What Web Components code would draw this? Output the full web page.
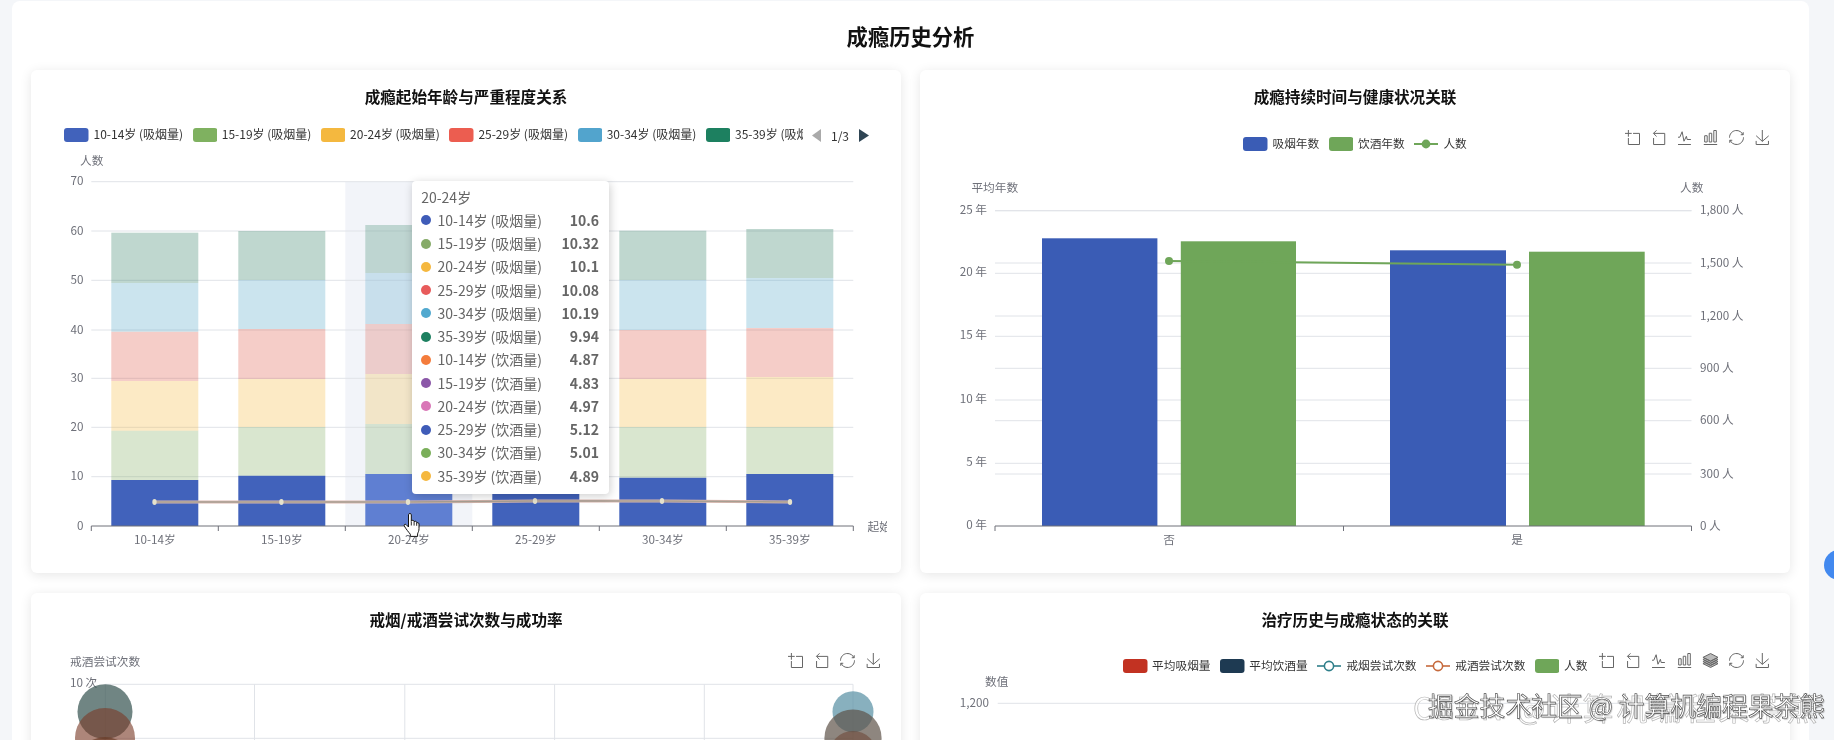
<!DOCTYPE html>
<html lang="zh">
<head>
<meta charset="utf-8">
<title>成瘾历史分析</title>
<style>
html,body{margin:0;height:740px;overflow:hidden;background:#f4f6f9;font-family:"Noto Sans CJK SC","Noto Sans",sans-serif}
</style>
</head>
<body>
<dash-page>
  <dash-card heading="成瘾起始年龄与严重程度关系">
    <chart-legend slot="top" pager style="margin:2px 0 0 33.4px;font-size:12px">
      <legend-item color="#4162bb">10-14岁 (吸烟量)</legend-item>
      <legend-item color="#7fb160">15-19岁 (吸烟量)</legend-item>
      <legend-item color="#f4b83f">20-24岁 (吸烟量)</legend-item>
      <legend-item color="#ec5d50">25-29岁 (吸烟量)</legend-item>
      <legend-item color="#52a4cd">30-34岁 (吸烟量)</legend-item>
      <legend-item color="#1d8060">35-39岁 (吸烟量)</legend-item>
    </chart-legend>
    <onset-chart></onset-chart>
    <hover-tip slot="over" heading="20-24岁" style="left:380.7px;top:110.5px">
      <tip-row color="#3f5cb8" value="10.6">10-14岁 (吸烟量)</tip-row>
      <tip-row color="#86ab68" value="10.32">15-19岁 (吸烟量)</tip-row>
      <tip-row color="#f5b83f" value="10.1">20-24岁 (吸烟量)</tip-row>
      <tip-row color="#e85b5b" value="10.08">25-29岁 (吸烟量)</tip-row>
      <tip-row color="#52a9cf" value="10.19">30-34岁 (吸烟量)</tip-row>
      <tip-row color="#1d8060" value="9.94">35-39岁 (吸烟量)</tip-row>
      <tip-row color="#f47c3c" value="4.87">10-14岁 (饮酒量)</tip-row>
      <tip-row color="#8b57a8" value="4.83">15-19岁 (饮酒量)</tip-row>
      <tip-row color="#d977b7" value="4.97">20-24岁 (饮酒量)</tip-row>
      <tip-row color="#3f5cb8" value="5.12">25-29岁 (饮酒量)</tip-row>
      <tip-row color="#7aaf5a" value="5.01">30-34岁 (饮酒量)</tip-row>
      <tip-row color="#f5b83f" value="4.89">35-39岁 (饮酒量)</tip-row>
    </hover-tip>
    <hand-cursor slot="over" style="left:372px;top:443px"></hand-cursor>
  </dash-card>

  <dash-card heading="成瘾持续时间与健康状况关联">
    <chart-legend slot="top" style="margin:11px 0 0 323.4px">
      <legend-item color="#3a5cb5">吸烟年数</legend-item>
      <legend-item color="#6fa659">饮酒年数</legend-item>
      <legend-item kind="line" color="#6fa659">人数</legend-item>
    </chart-legend>
    <tool-box slot="top" icons="zoom back line bar restore save"></tool-box>
    <duration-chart></duration-chart>
  </dash-card>

  <dash-card heading="戒烟/戒酒尝试次数与成功率">
    <axis-name slot="top" style="margin:4px 0 0 39px">戒酒尝试次数</axis-name>
    <tool-box slot="top" icons="zoom back restore save"></tool-box>
    <attempt-chart></attempt-chart>
  </dash-card>

  <dash-card heading="治疗历史与成瘾状态的关联">
    <chart-legend slot="top" style="margin:10px 0 0 203px">
      <legend-item color="#c23222">平均吸烟量</legend-item>
      <legend-item color="#1e3a52">平均饮酒量</legend-item>
      <legend-item kind="ring" color="#2f7f8a">戒烟尝试次数</legend-item>
      <legend-item kind="ring" color="#c66a3d">戒酒尝试次数</legend-item>
      <legend-item color="#6fa659">人数</legend-item>
    </chart-legend>
    <tool-box slot="top" icons="zoom back line bar stack restore save"></tool-box>
    <treatment-chart></treatment-chart>
  </dash-card>
</dash-page>
<float-dot></float-dot>
<water-mark></water-mark>

<script>
const FONT='"Noto Sans CJK SC","Noto Sans",sans-serif';
const AXIS='#6e7079',GRID='#e0e3e8';
const txt=(x,y,s,a='start',fill=AXIS,size=11.7,extra='')=>`<text x="${x}" y="${y}" text-anchor="${a}" dominant-baseline="central" fill="${fill}" font-size="${size}" ${extra}>${s}</text>`;
const hline=(x1,x2,y,c=GRID)=>`<line x1="${x1}" x2="${x2}" y1="${y}" y2="${y}" stroke="${c}" stroke-width="1"/>`;
const vline=(x,y1,y2,c=GRID)=>`<line x1="${x}" x2="${x}" y1="${y1}" y2="${y2}" stroke="${c}" stroke-width="1"/>`;
const rect=(x,y,w,h,f,o=1)=>`<rect x="${x}" y="${y}" width="${w}" height="${h}" fill="${f}" opacity="${o}"/>`;

class Base extends HTMLElement{
  constructor(){super();this.attachShadow({mode:'open'});}
  render(html){this.shadowRoot.innerHTML=html;}
}
class SvgChart extends Base{
  connectedCallback(){
    const [x,y]=this.origin;
    this.render(`<style>:host{display:block;height:422px}svg{display:block;overflow:visible;font-family:${FONT}}</style>
    <svg width="870" height="422" viewBox="${x} ${y} 870 422">${this.draw()}</svg>`);
  }
}

customElements.define('dash-page',class extends Base{
  connectedCallback(){this.render(`<style>
    :host{display:block;box-sizing:border-box;width:1797px;margin:1px 0 0 12px;padding:5px 19px 0;background:#fff;border-radius:8px;color:#000;filter:blur(.35px)}
    h1{margin:0 0 4px;text-align:center;font-size:21.3px;line-height:60px;height:60px;font-weight:700;color:#111}
    .grid{display:grid;grid-template-columns:870px 870px;gap:20px 19px}
  </style><h1>成瘾历史分析</h1><div class="grid"><slot></slot></div>`);}
});

customElements.define('dash-card',class extends Base{
  connectedCallback(){this.render(`<style>
    :host{display:block;position:relative;height:503px;background:#fff;border-radius:6px;box-shadow:0 2px 12px rgba(0,0,0,.1)}
    h2{margin:0;height:56px;line-height:53.5px;text-align:center;font-size:15.6px;font-weight:700;color:#111}
    .top{display:grid;height:25px;grid-template-columns:1fr}
    ::slotted([slot=top]){grid-area:1/1}
  </style><h2>${this.getAttribute('heading')}</h2><div class="top"><slot name="top"></slot></div><slot></slot><slot name="over"></slot>`);}
});

customElements.define('axis-name',class extends Base{
  connectedCallback(){this.render(`<style>:host{display:block;font-size:11.7px;line-height:16px;color:${AXIS};white-space:nowrap}</style><slot></slot>`);}
});

customElements.define('chart-legend',class extends Base{
  connectedCallback(){
    const pager=this.hasAttribute('pager');
    this.render(`<style>
      :host{display:flex;align-items:center;height:14px;font-size:11.7px;color:#333;white-space:nowrap}
      .items{display:flex;gap:9.6px;${pager?'width:738.2px;overflow:hidden;':''}}
      .pager{display:flex;align-items:center;gap:10px;margin-left:9.4px;color:#333;font-size:12px}
      svg{display:block}
    </style><div class="items"><slot></slot></div>${pager?`<div class="pager">
      <svg width="9" height="13" viewBox="0 0 9 13"><path d="M9 0V13L0 6.5Z" fill="#aaa"/></svg>
      <span>1/3</span>
      <svg width="10" height="13" viewBox="0 0 10 13"><path d="M0 0V13L10 6.5Z" fill="#2f4554"/></svg></div>`:''}`);
  }
});

customElements.define('legend-item',class extends Base{
  connectedCallback(){
    const c=this.getAttribute('color'),k=this.getAttribute('kind');
    const mark=k==='line'?`<line x1="0" x2="24" y1="7" y2="7" stroke="${c}" stroke-width="2"/><circle cx="12" cy="7" r="4.4" fill="${c}"/>`
      :k==='ring'?`<line x1="0" x2="24" y1="7" y2="7" stroke="${c}" stroke-width="1.6"/><circle cx="12" cy="7" r="4.6" fill="#fff" stroke="${c}" stroke-width="1.6"/>`
      :`<rect width="24.5" height="14" rx="3" fill="${c}"/>`;
    this.render(`<style>:host{display:flex;align-items:center;gap:4.6px;flex:none;line-height:14px}svg{display:block;flex:none}span{margin-bottom:2px}</style>
      <svg width="24.5" height="14" viewBox="0 0 24.5 14">${mark}</svg><span><slot></slot></span>`);
  }
});

const ICONS={
 zoom:'M0,13.5h26.9M13.5,26.9V0M32.1,13.5H58V58H13.5V32.1',
 back:'M22,1.4L9.9,13.5l12.3,12.3M10.3,13.5H54.9v44.6H10.3v-26',
 line:'M4.1,28.9h7.1l9.3-22l7.4,38l9.7-19.7l3,12.8h14.9M4.1,58h51.4',
 bar:'M6.7,22.9h10V48h-10V22.9zM24.9,13h10v35h-10V13zM43.2,2h10v46h-10V2zM3.1,58h53.7',
 restore:'M3.8,33.4M47,18.9h9.8V8.7M56.3,20.1C52.1,9,40.5,0.6,26.8,2.1C12.6,3.7,1.6,16.2,2.1,30.6M13,41.1H3.1v10.2M3.7,39.9c4.2,11.1,15.8,19.5,29.5,18c14.2-1.6,25.2-14.1,24.7-28.5',
 save:'M4.7,22.9L29.3,45.5L54.7,23.4M4.6,43.6L4.6,58L53.8,58L53.8,43.6M29.2,45.1L29.2,0',
 stack:'M8.2,38.4l-8.4,4.1l30.6,15.3L60,42.5l-8.1-4.1l-21.5,11L8.2,38.4zM51.9,30l-8.1,4.2l-13.4,6.9l-13.9-6.9L8.2,30l-8.4,4.2l8.4,4.2l22.2,11l21.5-11l8.1-4.2L51.9,30zM51.9,21.7l-8.1,4.2L35.7,30l-5.3,2.8L24.9,30l-8.4-4.1l-8.3-4.2l-8.4,4.2L8.2,30l8.3,4.2l13.9,6.9l13.4-6.9l8.1-4.2l8.1-4.1L51.9,21.7zM30.4,2.2L-0.2,17.5l8.4,4.1l8.3,4.2l8.4,4.2l5.5,2.7l5.3-2.7l8.1-4.2l8.1-4.2l8.1-4.1L30.4,2.2z'
};
customElements.define('tool-box',class extends Base{
  connectedCallback(){
    const list=this.getAttribute('icons').split(' ');
    this.render(`<style>:host{display:flex;gap:11px;justify-self:end;margin:4px 20px 0 0;height:15px}svg{display:block;overflow:visible}</style>`+
      list.map(n=>`<svg width="15" height="15" viewBox="0 0 60 60"><path d="${ICONS[n]}" fill="${n==='stack'?'#666':'none'}" fill-opacity=".45" fill-rule="evenodd" stroke="#666" stroke-width="1" vector-effect="non-scaling-stroke"/></svg>`).join(''));
  }
});

customElements.define('hover-tip',class extends Base{
  connectedCallback(){this.render(`<style>
    :host{display:block;position:absolute;box-sizing:border-box;width:197.4px;height:313.5px;padding:5px 10px 0 9.5px;background:#fff;border-radius:4px;box-shadow:1px 2px 10px rgba(0,0,0,.2);font-size:14px;color:#666;line-height:23.25px}
    .h{height:23.25px}
  </style><div class="h">${this.getAttribute('heading')}</div><slot></slot>`);}
});
customElements.define('tip-row',class extends Base{
  connectedCallback(){this.render(`<style>
    :host{display:flex;align-items:center;height:23.25px;white-space:nowrap}
    i{display:block;width:10px;height:10px;border-radius:50%;margin-right:6.3px;background:${this.getAttribute('color')}}
    b{margin-left:auto;font-weight:700}
  </style><i></i><span><slot></slot></span><b>${this.getAttribute('value')}</b>`);}
});

customElements.define('hand-cursor',class extends Base{
  connectedCallback(){this.render(`<style>:host{display:block;position:absolute;width:17px;height:23px}svg{display:block;overflow:visible}</style>
  <svg width="17" height="23" viewBox="0 0 17 23"><path d="M5.5 1.8c0-1.8 2.8-1.8 2.8 0v6.4c.3-1.2 2.7-1.2 2.8.2v.6c.4-1.1 2.4-1 2.6.3v.8c.5-.8 2.2-.6 2.3.8v4.6c0 2.6-.8 3.5-1.4 5.4v2.5H7.3v-2.2c-1.5-1.8-4.6-5.6-6-8.2-.6-1.2.6-2.3 1.8-1.4l2.4 2.4z" fill="#fff" stroke="#111" stroke-width="1" stroke-linejoin="round"/><path d="M8.3 8.5v4M11.1 9v3.6M13.7 10v2.8" stroke="#111" stroke-width=".9" fill="none"/></svg>`);}
});

customElements.define('onset-chart',class extends SvgChart{
  get origin(){return [31,151];}
  draw(){
    const ys=[[70,181.7],[60,231],[50,280.3],[40,330],[30,378.3],[20,427.3],[10,476.7],[0,526]];
    const x0=91.3,x1=853.3,step=127;
    const cats=['10-14岁','15-19岁','20-24岁','25-29岁','30-34岁','35-39岁'];
    const tops=[
      [480,430.7,381,331.7,283,232.7],
      [475.7,427,379,329,280,231],
      [474,424,374,324,273,225],
      [474,426,378,329,280,231],
      [477.7,427,379,330,280,230.7],
      [474,427,377,328,278,229]];
    const cols=['#4162bb','#80ac60','#f5b93f','#dd5a48','#52a4c8','#2a7a60'];
    let s=rect(x0+2*step,181.7,step,344.3,'#f2f4f9');
    ys.slice(0,-1).forEach(([v,y])=>s+=hline(x0,x1,y));
    ys.forEach(([v,y])=>s+=txt(83.6,y-2,v,'end'));
    cats.forEach((c,i)=>{
      const x=x0+i*step+20,t=tops[i];
      t.forEach((top,j)=>{
        const bottom=j?t[j-1]:526;
        const col=j===0&&i===2?'#5f7fd2':cols[j];
        s+=rect(x,top,87,bottom-top,col,j?(i===2?.26:.3):1);
      });
      s+=txt(x+43.5,538,c,'middle');
    });
    s+=hline(x0,x1,526,AXIS);
    for(let i=0;i<=6;i++)s+=vline(x0+i*step,526,531,AXIS);
    const pts=[[154.5,502],[281.4,502],[408,502],[535,501],[662,501],[790,502]];
    const poly=pts.map(p=>p.join(',')).join(' ');
    s+=`<polyline points="${poly}" fill="none" stroke="#dcb8b0" stroke-width="3"/><polyline points="${poly}" fill="none" stroke="#a79f92" stroke-width="1.4"/>`;
    pts.forEach(p=>s+=`<ellipse cx="${p[0]}" cy="${p[1]}" rx="2.2" ry="2.9" fill="#e6e2cc"/>`);
    s+=txt(80,159,'人数');
    s+=`<clipPath id="c"><rect x="860" y="515" width="27" height="24"/></clipPath><g clip-path="url(#c)">${txt(867.5,525.5,'起始年龄')}</g>`;
    return s;
  }
});

customElements.define('duration-chart',class extends SvgChart{
  get origin(){return [920,151];}
  draw(){
    const L=995,R=1691.5;
    const left=[['25 年',210.7],['20 年',273.3],['15 年',336.3],['10 年',400],['5 年',463.3],['0 年',526]];
    const right=[['1,800 人',210.7],['1,500 人',263],['1,200 人',316],['900 人',368.3],['600 人',420.7],['300 人',474],['0 人',526]];
    let s='';
    left.slice(0,-1).forEach(([n,y])=>s+=hline(L,R,y));
    right.slice(0,-1).forEach(([n,y])=>s+=hline(L,R,y));
    left.forEach(([n,y])=>s+=txt(987,y-2.5,n,'end'));
    right.forEach(([n,y])=>s+=txt(1700,y-2,n));
    s+=rect(1042,238.3,115.4,287.7,'#3a5cb5');
    s+=rect(1180.8,241.3,115.2,284.7,'#6fa659');
    s+=rect(1390,250.3,116,275.7,'#3a5cb5');
    s+=rect(1529,251.7,115.7,274.3,'#6fa659');
    s+=hline(L,R,526,AXIS);
    [L,1343.5,R].forEach(x=>s+=vline(x,526,531,AXIS));
    s+=`<line x1="1169" y1="261" x2="1517" y2="264.7" stroke="#6fa659" stroke-width="2"/><circle cx="1169" cy="261" r="4" fill="#6fa659"/><circle cx="1517" cy="264.7" r="4" fill="#6fa659"/>`;
    s+=txt(1169,538,'否','middle')+txt(1517,538,'是','middle');
    s+=txt(971.4,186.7,'平均年数')+txt(1680,186.7,'人数');
    return s;
  }
});

customElements.define('attempt-chart',class extends SvgChart{
  get origin(){return [31,674];}
  draw(){
    let s='';
    [105.3,254.5,404.8,554.6,704.3,853].forEach(x=>s+=vline(x,684.3,800));
    s+=hline(105.3,853,684.3)+hline(105.3,853,738.3);
    s+=txt(70,681.7,'10 次');
    const c=(x,y,r,f,o)=>`<circle cx="${x}" cy="${y}" r="${r}" fill="${f}" opacity="${o}"/>`;
    s+=c(105,711.7,27.5,'#3e5a58',.74);
    s+=c(105,738,30,'#7a3c28',.62);
    s+=c(105,765,28,'#6a3c28',.7);
    s+=c(853,711.7,20.5,'#5a91a5',.72);
    s+=c(853,738,28.6,'#5e5348',.7);
    s+=c(853,755,24,'#6e4a38',.6);
    return s;
  }
});

customElements.define('treatment-chart',class extends SvgChart{
  get origin(){return [920,674];}
  draw(){
    return txt(985,680.2,'数值')+txt(989,701.7,'1,200','end')+hline(997.7,1692,703.3);
  }
});

customElements.define('float-dot',class extends Base{
  connectedCallback(){this.render(`<style>:host{display:block;position:fixed;left:1824px;top:550px;width:30px;height:30px;border-radius:50%;background:#4289ef}</style>`);}
});

customElements.define('water-mark',class extends Base{
  connectedCallback(){this.render(`<style>
    :host{display:block;position:fixed;left:0;top:0;width:1834px;height:740px;pointer-events:none;overflow:hidden;white-space:nowrap;filter:blur(.3px)}
    span{position:absolute}
    .g{left:1413px;top:685px;font-size:31px;line-height:44px;letter-spacing:3px;color:rgba(255,255,255,.6);-webkit-text-stroke:.7px #b5b5b5}
    .f{left:1428px;top:688px;font-size:25.8px;line-height:34px;color:#fff;-webkit-text-stroke:.6px #4a4a4a;text-shadow:1px 1px 1px rgba(0,0,0,.25)}
  </style><span class="g">CSDN @计算机编程果茶熊</span><span class="f">掘金技术社区 @ 计算机编程果茶熊</span>`);}
});
</script>
</body>
</html>
